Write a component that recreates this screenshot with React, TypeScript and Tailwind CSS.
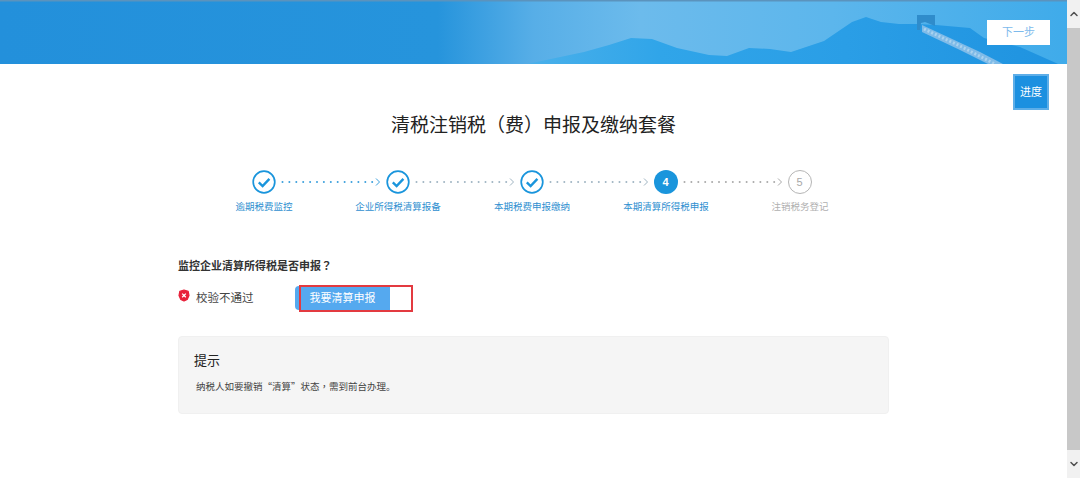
import { ChevronDown, ChevronUp } from 'lucide-react';

const steps = [
  { label: '逾期税费监控', state: 'done' },
  { label: '企业所得税清算报备', state: 'done' },
  { label: '本期税费申报缴纳', state: 'done' },
  { label: '本期清算所得税申报', state: 'current' },
  { label: '注销税务登记', state: 'todo' },
];

function HeaderArt() {
  return (
    <svg className="absolute inset-0 h-full w-full" viewBox="0 0 1067 64" preserveAspectRatio="none">
      <defs>
        <linearGradient id="sky" x1="0" x2="1" y1="0" y2="0">
          <stop offset="0" stopColor="#2390db" />
          <stop offset="0.41" stopColor="#2694dc" />
          <stop offset="0.5" stopColor="#57aee7" />
          <stop offset="0.6" stopColor="#6cbbec" />
          <stop offset="0.78" stopColor="#5cb6ec" />
          <stop offset="1" stopColor="#3fabea" />
        </linearGradient>
        <linearGradient id="hill" x1="0" x2="1" y1="0" y2="0">
          <stop offset="0" stopColor="#4ab0ea" />
          <stop offset="0.25" stopColor="#30a5e9" />
          <stop offset="0.6" stopColor="#2a9ee6" />
          <stop offset="1" stopColor="#1f93e0" />
        </linearGradient>
      </defs>
      <rect width="1067" height="64" fill="url(#sky)" />
      <rect width="1067" height="1.5" fill="#5b93bd" />
      <path
        d="M527 64 L584 52 L609 45 L631 38 L652 39 L677 48 L709 55 L727 56 L749 48 L770 49 L791 52 L824 41 L852 22 L866 17 L881 22 L899 24 L917 24 L936 25 L970 28 L984 38 L1020 47 L1056 63 L1058 64 Z"
        fill="url(#hill)"
      />
      <path d="M917 15 H935 V26 L925 22 L921 23 L920 30 L917 30 Z" fill="#2f8ccb" />
      <path d="M922 25 L950 38 L980 52 L1003 64 L988 64 L960 50 L922 32 Z" fill="#7fbbe8" />
      <path d="M924 29 L960 46 L995 64" fill="none" stroke="#a9d2ef" strokeWidth="3" strokeDasharray="2 2" />
    </svg>
  );
}

function Connector({ color }: { color: string }) {
  return (
    <svg width="110" height="24" viewBox="0 0 110 24" className="shrink-0">
      {Array.from({ length: 14 }).map((_, i) => (
        <circle key={i} cx={6.5 + i * 6.9} cy="12" r="1" fill={color} />
      ))}
      <path d="M100 8.5 L103.5 12 L100 15.5" fill="none" stroke={color} strokeWidth="1" />
    </svg>
  );
}

function StepIcon({ state, index }: { state: string; index: number }) {
  if (state === 'done') {
    return (
      <svg width="24" height="24" viewBox="0 0 24 24" className="shrink-0">
        <circle cx="12" cy="12" r="10.8" fill="#fff" stroke="#1a95dc" strokeWidth="1.7" />
        <path d="M6.8 12.4 L10.6 16 L17.4 8.9" fill="none" stroke="#1a95dc" strokeWidth="2.4" />
      </svg>
    );
  }
  if (state === 'current') {
    return (
      <div className="flex h-6 w-6 shrink-0 items-center justify-center rounded-full bg-[#1a95dc] text-[11px] font-bold text-white">
        {index}
      </div>
    );
  }
  return (
    <div className="flex h-6 w-6 shrink-0 items-center justify-center rounded-full border-[1.5px] border-[#b5b5b5] text-[11px] text-[#a8a8a8]">
      {index}
    </div>
  );
}

export default function App() {
  return (
    <div className="flex h-[478px] w-[1080px] overflow-hidden bg-white font-['Liberation_Sans','Noto_Sans_CJK_SC',sans-serif]">
      <div className="relative flex-1">
        {/* Header */}
        <div className="relative flex h-16 items-center justify-end pr-[17px]">
          <HeaderArt />
          <button className="relative mt-[1px] h-[25px] w-[63px] bg-white text-[11px] text-[#7dbaec]">下一步</button>
        </div>

        <button className="absolute left-[1013px] top-[74px] h-9 w-9 border-2 border-[#5eaee8] bg-[#1c90e0] text-[11px] text-white">
          进度
        </button>

        <h1 className="mt-[47px] text-center font-['Noto_Sans_CJK_SC',sans-serif] text-[19px] leading-[26px] text-[#222]">
          清税注销税（费）申报及缴纳套餐
        </h1>

        {/* Steps */}
        <div className="mt-[33px] flex justify-center pr-[4px]">
          {steps.map((step, i) => (
            <div key={step.label} className="flex items-center">
              <StepIcon state={step.state} index={i + 1} />
              {i < steps.length - 1 && <Connector color={i === 0 ? '#3a9fdc' : i === 3 ? '#a9a9a9' : '#9fb4c2'} />}
            </div>
          ))}
        </div>
        <div className="mt-[6px] flex justify-center pr-[3px]">
          {steps.map((step) => (
            <div
              key={step.label}
              className={`w-[134px] text-center text-[9.5px] leading-[14px] ${step.state === 'todo' ? 'text-[#b0b0b0]' : 'text-[#2f8fd0]'}`}
            >
              {step.label}
            </div>
          ))}
        </div>

        {/* Check result */}
        <div className="ml-[178px] mt-[43px] w-[711px]">
          <div className="text-[11px] font-bold leading-4 text-[#333]">
            监控企业清算所得税是否申报<span className="font-['Noto_Sans_CJK_TC',sans-serif]">？</span>
          </div>
          <div className="mt-[10px] flex h-[26px] items-center">
            <svg width="12" height="13" viewBox="0 0 12 13" className="mb-[3px] shrink-0">
              <path
                d="M6 1 L10.2 2.4 L11 6.6 L9.2 10.4 L6 12 L2.8 10.4 L1 6.6 L1.8 2.4 Z"
                fill="#e8203a"
                stroke="#e8203a"
                strokeWidth="1.2"
                strokeLinejoin="round"
              />
              <path d="M4.2 4.6 L7.8 8.2 M7.8 4.6 L4.2 8.2" stroke="#fff" strokeWidth="1.3" />
            </svg>
            <span className="ml-[6px] w-[99px] pt-[4px] text-[11.5px] text-[#444]">校验不通过</span>
            <div className="relative h-[24px] w-[118px]">
              <button className="h-[24px] w-[95px] rounded-l-sm bg-[#55a9ef] text-[11px] text-white">我要清算申报</button>
              <div className="absolute left-[4px] top-0 h-[27px] w-[114px] border-2 border-[#e33a40]" />
            </div>
          </div>

          {/* Tip */}
          <div className="mt-[26px] h-[78px] rounded border border-[#f0f0f0] bg-[#f5f5f5] px-[15px] pt-[15px]">
            <div className="text-[13px] leading-[18px] text-[#222]">提示</div>
            <div className="ml-[2px] mt-[9px] font-['Noto_Sans_CJK_SC',sans-serif] text-[9.5px] leading-[14px] text-[#444]">
              纳税人如要撤销“清算”状态<span className="font-['Noto_Sans_CJK_TC',sans-serif]">，</span>需到前台办理。
            </div>
          </div>
        </div>
      </div>

      {/* Scrollbar */}
      <div className="flex h-full w-[13px] flex-col bg-[#f1f1f1]">
        <div className="flex h-[28px] items-center justify-center">
          <ChevronUp size={12} strokeWidth={3} className="text-[#505050]" />
        </div>
        <div className="flex-1 bg-[#c8c8c8]" />
        <div className="flex h-[28px] items-center justify-center">
          <ChevronDown size={12} strokeWidth={3} className="text-[#505050]" />
        </div>
      </div>
    </div>
  );
}
